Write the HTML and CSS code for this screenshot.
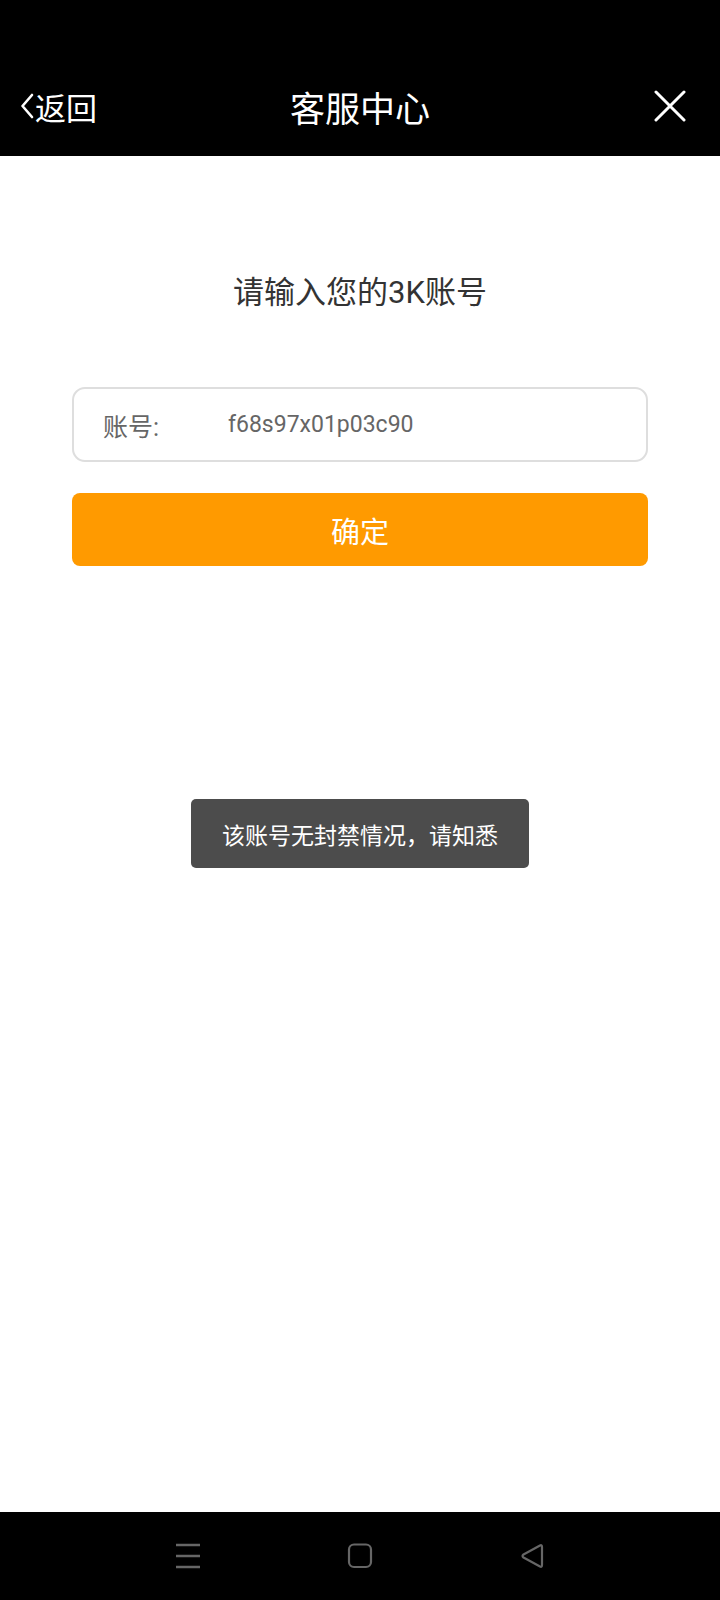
FILE: index.html
```html
<!DOCTYPE html>
<html lang="zh-CN">
<head>
<meta charset="utf-8">
<title>客服中心</title>
<link rel="stylesheet" href="styles.css">
</head>
<body>
<div class="app">
  <header class="topbar">
    <div class="navrow">
      <div class="back">
        <svg class="chev" width="14" height="26" viewBox="0 0 14 26"><polyline points="12,2 2.5,13 12,24" fill="none" stroke="#fff" stroke-width="2.6" stroke-linecap="round" stroke-linejoin="round"/></svg>
        <span>返回</span>
      </div>
      <div class="title">客服中心</div>
      <svg class="close" width="32" height="32" viewBox="0 0 32 32"><path d="M2 2 L30 30 M30 2 L2 30" stroke="#fff" stroke-width="3" stroke-linecap="round"/></svg>
    </div>
  </header>
  <main class="content">
    <h1 class="heading">请输入您的3K账号</h1>
    <div class="field">
      <span class="label">账号:</span>
      <span class="value">f68s97x01p03c90</span>
    </div>
    <button class="submit">确定</button>
  </main>
  <nav class="sysnav">
    <svg width="26" height="26" viewBox="0 0 26 26"><path d="M1 2 H25 M1 13 H25 M1 24 H25" stroke="#666" stroke-width="2.4"/></svg>
    <svg width="26" height="26" viewBox="0 0 26 26"><rect x="2" y="1.5" width="22" height="22.5" rx="5" fill="none" stroke="#666" stroke-width="2.2"/></svg>
    <svg width="26" height="26" viewBox="0 0 26 26"><path d="M21 2.5 Q23 1.5 23 4 V22 Q23 24.5 21 23.5 L4.5 14.5 Q2.5 13 4.5 11.5 Z" fill="none" stroke="#666" stroke-width="2.2" stroke-linejoin="round"/></svg>
  </nav>
  <div class="toast">该账号无封禁情况，请知悉</div>
</div>
</body>
</html>
```

FILE: styles.css
```css
html, body {
  margin: 0;
  padding: 0;
  background: #fff;
}
body {
  font-family: Roboto, "Noto Sans CJK SC", sans-serif;
}
.app {
  position: relative;
  width: 720px;
  height: 1600px;
  display: flex;
  flex-direction: column;
  overflow: hidden;
}
.topbar {
  background: #000;
  height: 156px;
  padding-top: 58px;
  box-sizing: border-box;
  flex: none;
}
.navrow {
  position: relative;
  height: 96px;
  display: flex;
  align-items: center;
  justify-content: space-between;
  padding: 0 34px 0 20px;
  box-sizing: border-box;
  color: #fff;
}
.back {
  display: flex;
  align-items: center;
  gap: 1px;
  font-size: 31px;
  font-family: "Noto Sans CJK SC", sans-serif;
  line-height: 1;
}
.chev {
  display: block;
}
.title {
  position: absolute;
  left: 0;
  right: 0;
  text-align: center;
  font-size: 35px;
  font-family: "Noto Sans CJK SC", sans-serif;
  pointer-events: none;
}
.close {
  display: block;
}
.content {
  flex: 1;
  padding: 117px 72px 0;
  display: flex;
  flex-direction: column;
}
.heading {
  margin: 0;
  font-weight: normal;
  font-size: 31px;
  line-height: 40px;
  height: 40px;
  color: #333;
  text-align: center;
}
.field {
  margin-top: 74px;
  height: 75px;
  box-sizing: border-box;
  border: 2px solid #dedede;
  border-radius: 13px;
  display: flex;
  align-items: center;
  padding-left: 29px;
  color: #666;
}
.label {
  width: 125px;
  font-size: 25px;
}
.value {
  font-size: 23px;
}
.submit {
  margin-top: 31px;
  height: 73px;
  border: none;
  border-radius: 8px;
  background: #ff9a00;
  color: #fff;
  font-family: "Noto Sans CJK SC", sans-serif;
  font-size: 29px;
  padding: 0;
}
.sysnav {
  flex: none;
  height: 88px;
  background: #000;
  display: flex;
  justify-content: center;
  align-items: flex-start;
  gap: 146px;
  padding-top: 31px;
  box-sizing: border-box;
}
.sysnav svg {
  display: block;
}
.toast {
  position: absolute;
  top: 799px;
  left: 50%;
  transform: translateX(-50%);
  height: 69px;
  padding: 0 31px;
  box-sizing: border-box;
  display: flex;
  align-items: center;
  background: #4c4c4c;
  border-radius: 5px;
  color: #fff;
  font-family: "Noto Sans CJK SC", sans-serif;
  font-size: 23px;
  white-space: nowrap;
}
```
